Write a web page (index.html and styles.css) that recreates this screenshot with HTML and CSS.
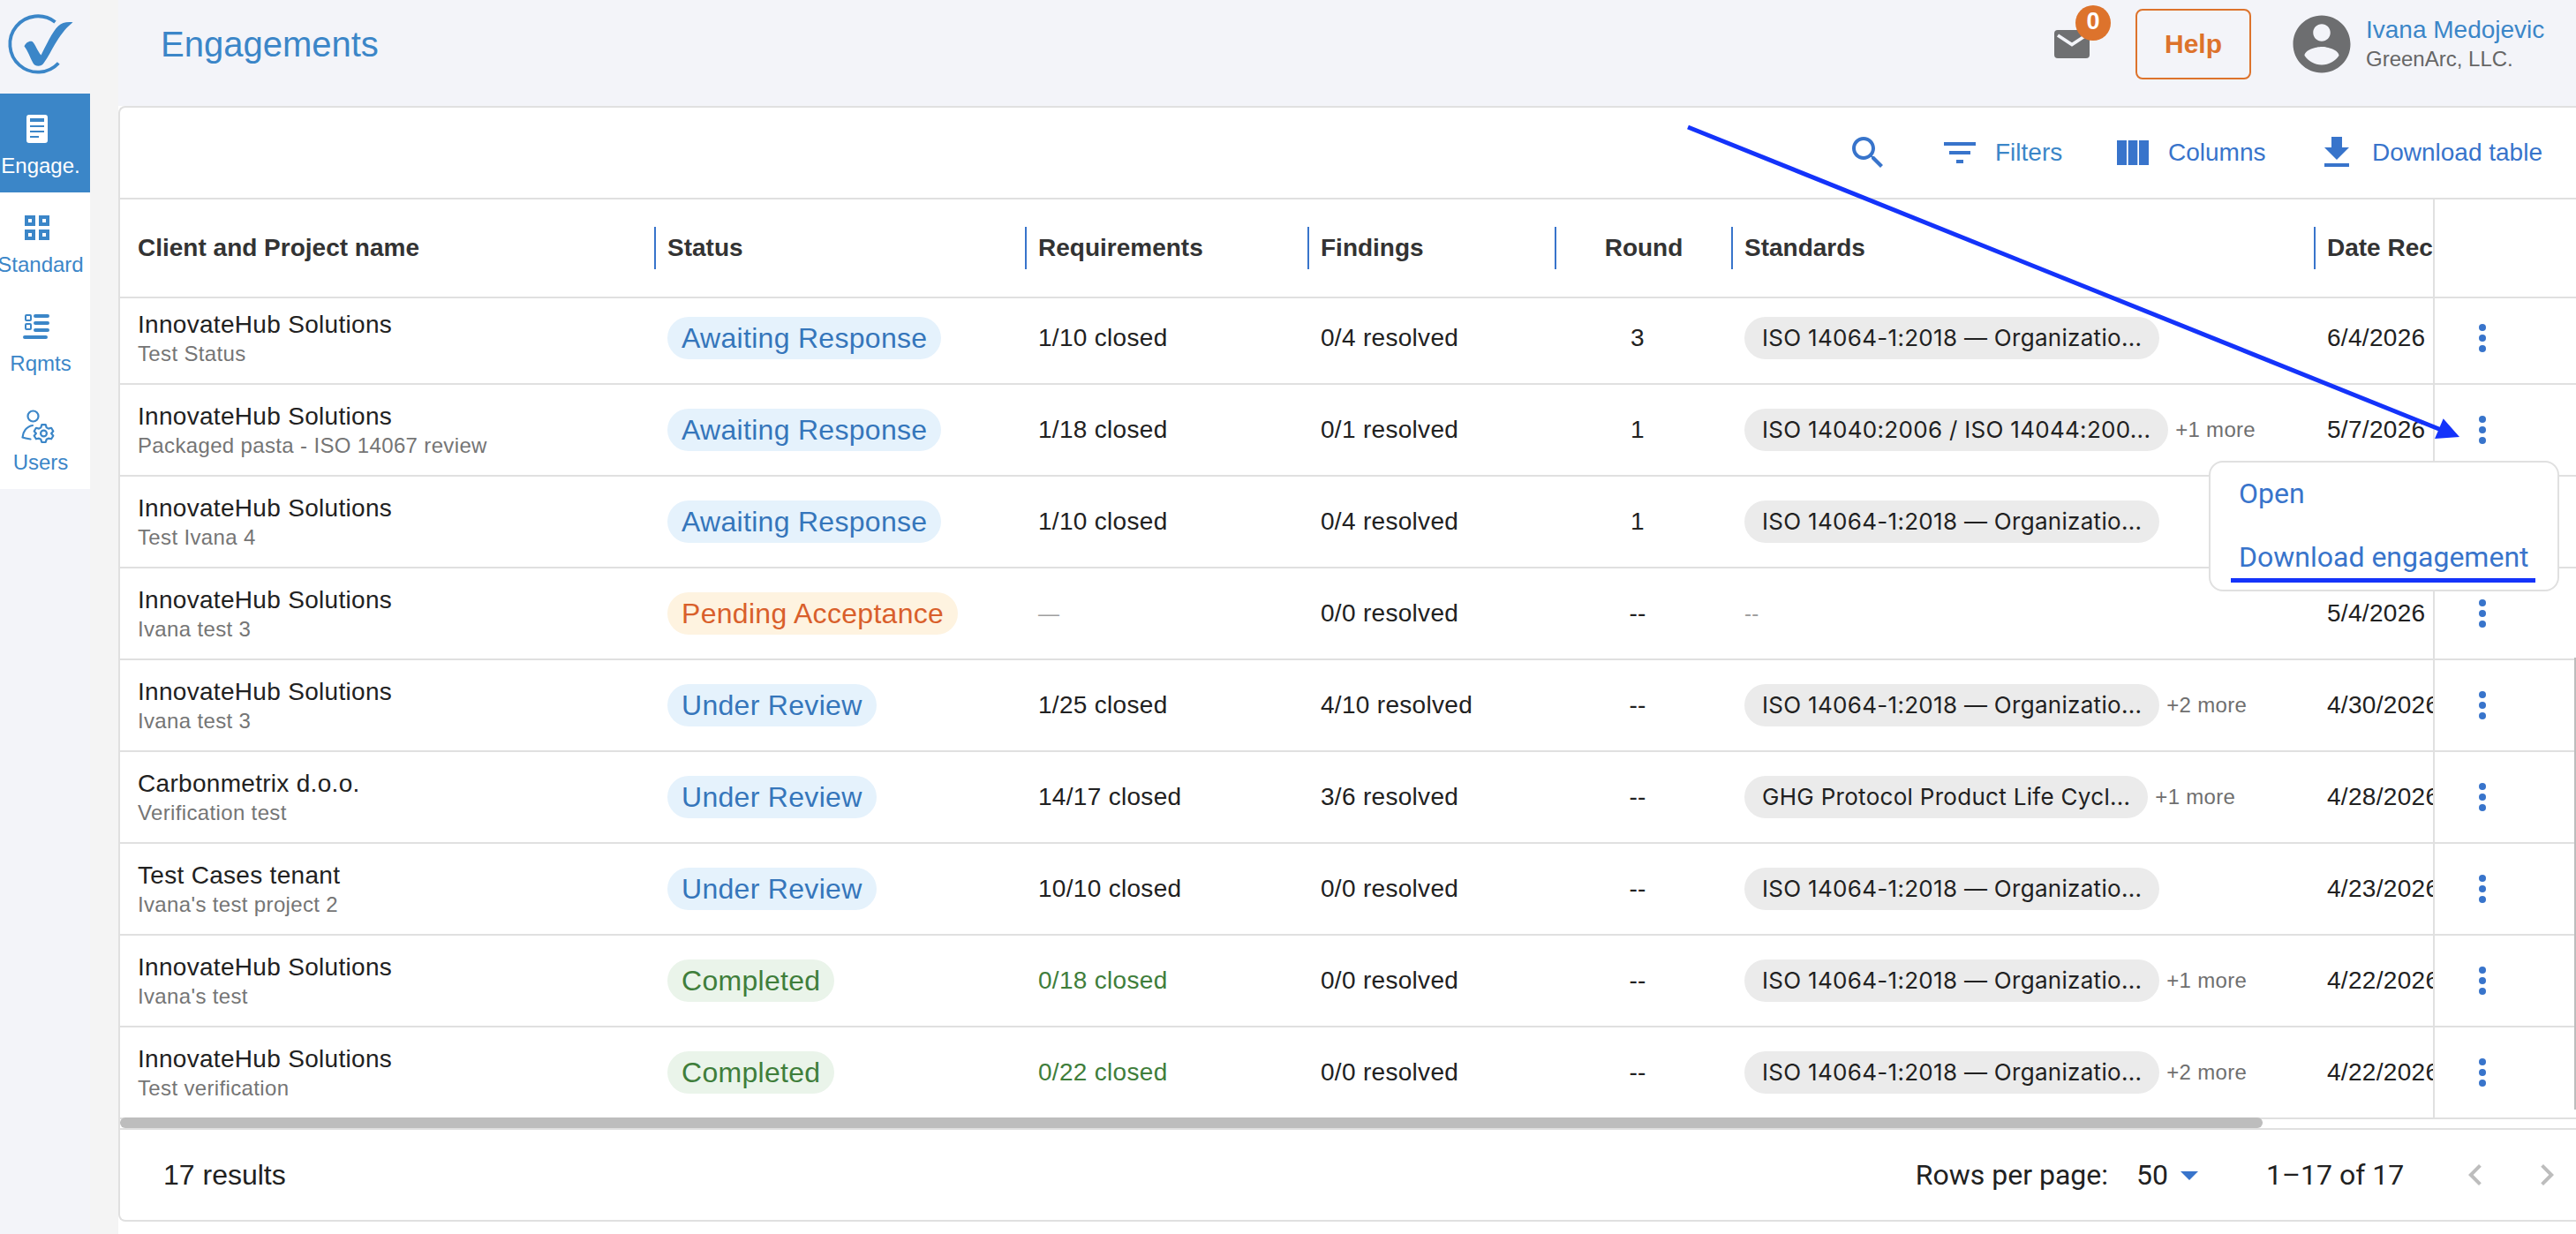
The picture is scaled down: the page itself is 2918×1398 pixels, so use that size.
FILE: index.html
```html
<!DOCTYPE html>
<html lang="en">
<head>
  <meta charset="UTF-8" />
  <meta name="viewport" content="width=device-width, initial-scale=1.0"/>
  <title>Engagements</title>
  <link rel="stylesheet" href="styles.css">
</head>
<body>
  <!-- Shared icons -->
  <svg class="defs" width="0" height="0">
    <symbol id="dots" viewBox="0 0 8 32">
      <circle cx="4" cy="4" r="4"/><circle cx="4" cy="16" r="4"/><circle cx="4" cy="28" r="4"/>
    </symbol>
  </svg>

  <div class="app">
    <nav class="sidebar">
      <div class="logo">
        <svg width="102" height="106" viewBox="0 0 102 106">
          <path d="M62.5 25 A31.7 31.7 0 1 0 66.3 71.5" fill="none" stroke="#3b86c8" stroke-width="3.8"/>
          <path d="M27.5 52.5 C29 48.5 33 46 36.5 47 C40 50 42.5 58 46.5 62.5 C52 52 59 36 66 29.500 C70 25.500 76 24.500 82.500 25.300 C73 33 68 41 62 50.500 C58 57 55 64 49.500 71.500 C46.500 76 40 75.800 37.500 71.500 C34.500 66 31.500 57.500 27.500 52.500 Z" fill="#3b86c8"/>
        </svg>
      </div>
      <a class="nav-item active">
        <svg width="40" height="40" viewBox="0 0 40 40">
          <path fill="#fff" fill-rule="evenodd" d="M11 4h18a3 3 0 0 1 3 3v26a3 3 0 0 1-3 3H11a3 3 0 0 1-3-3V7a3 3 0 0 1 3-3z M12 8v4h16V8z M12 16v2h16v-2z M12 22v2h16v-2z M12 28v2h10v-2z"/>
        </svg>
        <span>Engage.</span>
      </a>
      <a class="nav-item">
        <svg width="40" height="40" viewBox="0 0 40 40">
          <path fill="none" stroke="#3b86c8" stroke-width="4" d="M8 8h8v8H8z M24 8h8v8h-8z M8 24h8v8H8z M24 24h8v8h-8z"/>
        </svg>
        <span>Standard</span>
      </a>
      <a class="nav-item">
        <svg width="40" height="40" viewBox="0 0 40 40">
          <g fill="none" stroke="#3b86c8">
            <path stroke-width="2" d="M8 7h4a1 1 0 0 1 1 1v4a1 1 0 0 1-1 1H8a1 1 0 0 1-1-1V8a1 1 0 0 1 1-1z M8 17h4a1 1 0 0 1 1 1v4a1 1 0 0 1-1 1H8a1 1 0 0 1-1-1v-4a1 1 0 0 1 1-1z"/>
            <path stroke-width="4" stroke-linecap="round" d="M18 8h14 M18 16h14 M18 24h14 M6 32h24"/>
          </g>
        </svg>
        <span>Rqmts</span>
      </a>
      <a class="nav-item">
        <svg width="40" height="40" viewBox="0 0 40 40">
          <g fill="none" stroke="#3b86c8" stroke-width="2.200" stroke-linecap="round" stroke-linejoin="round">
            <circle cx="15.500" cy="9.500" r="6"/>
            <path d="M15 20C8 21 4 27 3.500 33.500C6 34.500 9 35 12.500 35.500"/>
            <circle cx="27.500" cy="29" r="3.400"/>
            <path d="M25.300 19.200h4.400l1 3.200 2.200 1.200 3.200-.8 2.200 3.700-2.200 2.500 2.200 2.700-2.200 3.600-3.200-.7-2.200 1.200-1 3.200h-4.400l-1-3.200-2.200-1.200-3.200.7-2.200-3.600 2.200-2.700-2.200-2.500 2.200-3.700 3.200.8 2.200-1.200z"/>
          </g>
        </svg>
        <span>Users</span>
      </a>
    </nav>

    <main class="main">
      <header class="topbar">
        <h1>Engagements</h1>
        <div class="mail">
          <svg width="40" height="32" viewBox="0 0 40 32">
            <rect width="40" height="32" rx="4" fill="#6f7072"/>
            <path d="M4 6l16 10.500L36 6" fill="none" stroke="#f3f4f9" stroke-width="3.800"/>
          </svg>
          <span class="badge">0</span>
        </div>
        <button class="help">Help</button>
        <svg class="avatar" width="78" height="78" viewBox="0 0 24 24">
          <path fill="#6d6e70" d="M12 2C6.480 2 2 6.480 2 12s4.480 10 10 10 10-4.480 10-10S17.520 2 12 2zm0 3c1.660 0 3 1.340 3 3s-1.340 3-3 3-3-1.340-3-3 1.340-3 3-3zm0 14.200c-2.500 0-4.710-1.280-6-3.220.030-1.990 4-3.080 6-3.080 1.990 0 5.970 1.090 6 3.080-1.290 1.940-3.500 3.220-6 3.220z"/>
        </svg>
        <div class="user">
          <div class="user-name">Ivana Medojevic</div>
          <div class="user-org">GreenArc, LLC.</div>
        </div>
      </header>

      <section class="card">
        <div class="toolbar">
          <svg class="search" width="48" height="48" viewBox="0 0 24 24">
            <path d="M15.500 14h-.790l-.280-.270C15.410 12.590 16 11.110 16 9.500 16 5.910 13.090 3 9.500 3S3 5.910 3 9.500 5.910 16 9.500 16c1.610 0 3.090-.590 4.230-1.570l.270.280v.790l5 4.990L20.490 19l-4.990-5zm-6 0C7.010 14 5 11.990 5 9.500S7.010 5 9.500 5 14 7.010 14 9.500 11.990 14 9.500 14z"/>
          </svg>
          <a class="tool tool-filters">
            <svg width="48" height="48" viewBox="0 0 24 24"><path d="M10 18h4v-2h-4v2zM3 6v2h18V6H3zm3 7h12v-2H6v2z"/></svg>
            Filters
          </a>
          <a class="tool tool-columns">
            <svg width="48" height="48" viewBox="0 0 48 48"><path d="M6 10h11v28H6z M18.700 10h10.600v28H18.700z M31 10h11v28H31z"/></svg>
            Columns
          </a>
          <a class="tool tool-download">
            <svg width="48" height="48" viewBox="0 0 24 24"><path d="M19 9h-4V3H9v6H5l7 7 7-7zM5 18v2h14v-2H5z"/></svg>
            Download table
          </a>
        </div>

        <div class="row head">
          <div class="cell">Client and Project name</div>
          <div class="cell"><span class="sep">Status</span></div>
          <div class="cell"><span class="sep">Requirements</span></div>
          <div class="cell"><span class="sep">Findings</span></div>
          <div class="cell"><span class="sep sep-center">Round</span></div>
          <div class="cell"><span class="sep">Standards</span></div>
          <div class="cell"><span class="sep">Date Rec</span></div>
          <div class="cell actions"></div>
        </div>

        <div class="rows">
          <div class="row">
            <div class="cell client"><div class="name">InnovateHub Solutions</div><div class="project">Test Status</div></div>
            <div class="cell"><span class="status blue">Awaiting Response</span></div>
            <div class="cell">1/10 closed</div>
            <div class="cell">0/4 resolved</div>
            <div class="cell round">3</div>
            <div class="cell"><span class="chip">ISO 14064-1:2018 — Organizatio...</span></div>
            <div class="cell">6/4/2026</div>
            <div class="cell actions"><svg class="dots"><use href="#dots"/></svg></div>
          </div>
          <div class="row">
            <div class="cell client"><div class="name">InnovateHub Solutions</div><div class="project">Packaged pasta - ISO 14067 review</div></div>
            <div class="cell"><span class="status blue">Awaiting Response</span></div>
            <div class="cell">1/18 closed</div>
            <div class="cell">0/1 resolved</div>
            <div class="cell round">1</div>
            <div class="cell"><span class="chip">ISO 14040:2006 / ISO 14044:200...</span><span class="more">+1 more</span></div>
            <div class="cell">5/7/2026</div>
            <div class="cell actions">
              <svg class="dots"><use href="#dots"/></svg>
              <div class="menu">
                <a>Open</a>
                <a class="marked">Download engagement</a>
              </div>
            </div>
          </div>
          <div class="row">
            <div class="cell client"><div class="name">InnovateHub Solutions</div><div class="project">Test Ivana 4</div></div>
            <div class="cell"><span class="status blue">Awaiting Response</span></div>
            <div class="cell">1/10 closed</div>
            <div class="cell">0/4 resolved</div>
            <div class="cell round">1</div>
            <div class="cell"><span class="chip">ISO 14064-1:2018 — Organizatio...</span></div>
            <div class="cell"></div>
            <div class="cell actions"></div>
          </div>
          <div class="row">
            <div class="cell client"><div class="name">InnovateHub Solutions</div><div class="project">Ivana test 3</div></div>
            <div class="cell"><span class="status orange">Pending Acceptance</span></div>
            <div class="cell"><span class="empty">—</span></div>
            <div class="cell">0/0 resolved</div>
            <div class="cell round">--</div>
            <div class="cell"><span class="empty">--</span></div>
            <div class="cell">5/4/2026</div>
            <div class="cell actions"><svg class="dots"><use href="#dots"/></svg></div>
          </div>
          <div class="row">
            <div class="cell client"><div class="name">InnovateHub Solutions</div><div class="project">Ivana test 3</div></div>
            <div class="cell"><span class="status blue">Under Review</span></div>
            <div class="cell">1/25 closed</div>
            <div class="cell">4/10 resolved</div>
            <div class="cell round">--</div>
            <div class="cell"><span class="chip">ISO 14064-1:2018 — Organizatio...</span><span class="more">+2 more</span></div>
            <div class="cell">4/30/2026</div>
            <div class="cell actions"><svg class="dots"><use href="#dots"/></svg></div>
          </div>
          <div class="row">
            <div class="cell client"><div class="name">Carbonmetrix d.o.o.</div><div class="project">Verification test</div></div>
            <div class="cell"><span class="status blue">Under Review</span></div>
            <div class="cell">14/17 closed</div>
            <div class="cell">3/6 resolved</div>
            <div class="cell round">--</div>
            <div class="cell"><span class="chip">GHG Protocol Product Life Cycl...</span><span class="more">+1 more</span></div>
            <div class="cell">4/28/2026</div>
            <div class="cell actions"><svg class="dots"><use href="#dots"/></svg></div>
          </div>
          <div class="row">
            <div class="cell client"><div class="name">Test Cases tenant</div><div class="project">Ivana's test project 2</div></div>
            <div class="cell"><span class="status blue">Under Review</span></div>
            <div class="cell">10/10 closed</div>
            <div class="cell">0/0 resolved</div>
            <div class="cell round">--</div>
            <div class="cell"><span class="chip">ISO 14064-1:2018 — Organizatio...</span></div>
            <div class="cell">4/23/2026</div>
            <div class="cell actions"><svg class="dots"><use href="#dots"/></svg></div>
          </div>
          <div class="row">
            <div class="cell client"><div class="name">InnovateHub Solutions</div><div class="project">Ivana's test</div></div>
            <div class="cell"><span class="status green">Completed</span></div>
            <div class="cell done">0/18 closed</div>
            <div class="cell">0/0 resolved</div>
            <div class="cell round">--</div>
            <div class="cell"><span class="chip">ISO 14064-1:2018 — Organizatio...</span><span class="more">+1 more</span></div>
            <div class="cell">4/22/2026</div>
            <div class="cell actions"><svg class="dots"><use href="#dots"/></svg></div>
          </div>
          <div class="row">
            <div class="cell client"><div class="name">InnovateHub Solutions</div><div class="project">Test verification</div></div>
            <div class="cell"><span class="status green">Completed</span></div>
            <div class="cell done">0/22 closed</div>
            <div class="cell">0/0 resolved</div>
            <div class="cell round">--</div>
            <div class="cell"><span class="chip">ISO 14064-1:2018 — Organizatio...</span><span class="more">+2 more</span></div>
            <div class="cell">4/22/2026</div>
            <div class="cell actions"><svg class="dots"><use href="#dots"/></svg></div>
          </div>
          <div class="vscroll"></div>
        </div>
        <div class="hscroll"><div class="thumb"></div></div>

        <footer class="footer">
          <div class="results">17 results</div>
          <div class="rpp">Rows per page:</div>
          <div class="rpp-value">50</div>
          <svg class="caret" width="20" height="10" viewBox="0 0 20 10"><path d="M0 0h20L10 10z"/></svg>
          <div class="range">1–17 of 17</div>
          <svg class="prev" width="48" height="48" viewBox="0 0 24 24"><path d="M15.410 16.590L10.830 12l4.580-4.590L14 6l-6 6 6 6 1.410-1.410z"/></svg>
          <svg class="next" width="48" height="48" viewBox="0 0 24 24"><path d="M8.590 16.590L13.170 12 8.590 7.410 10 6l6 6-6 6-1.410-1.410z"/></svg>
        </footer>
      </section>
    </main>

    <!-- Arrow pointing at the row menu -->
    <svg class="arrow" width="2918" height="1398" viewBox="0 0 2918 1398">
      <path d="M1912 144L2764 486.500" fill="none" stroke="#1433fa" stroke-width="5"/>
      <path d="M2786 495L2767.700 474.300L2758 497z" fill="#1433fa"/>
    </svg>
  </div>
</body>
</html>
```

FILE: styles.css
```css
* {
  box-sizing: border-box;
}
body {
  margin: 0;
  font-family: "Liberation Sans", Helvetica, Arial, sans-serif;
  font-size: 28px;
  color: #212121;
  background-color: #fff;
  overflow: hidden;
}
.defs {
  display: none;
}
.app {
  position: relative;
  display: flex;
  width: 2918px;
  height: 1398px;
  background-color: #f4f4f4;
}

/* Sidebar */
.sidebar {
  width: 102px;
  margin-right: 32px;
  flex-shrink: 0;
  background-color: #f3f4f9;
}
.logo {
  height: 106px;
}
.logo svg {
  display: block;
}
.nav-item {
  display: flex;
  flex-direction: column;
  align-items: center;
  height: 112px;
  padding: 20px 18px 0 0;
  font-size: 24px;
  color: #3b86c8;
  background-color: #fff;
}
.nav-item.active {
  color: #fff;
  background-color: #3b86c8;
}
.nav-item svg {
  display: block;
  overflow: visible;
}
.nav-item span {
  margin: 8px -20px 0 -12px;
  line-height: 28px;
}

/* Top bar */
.main {
  flex: 1;
  min-width: 0;
  background-color: #fff;
}
.topbar {
  display: flex;
  align-items: center;
  height: 120px;
  padding: 0 36px 20px 48px;
  background-color: #f3f4f9;
}
h1 {
  margin: 0 auto 0 0;
  font-size: 40px;
  font-weight: normal;
  color: #3b86c8;
}
.mail {
  position: relative;
  width: 40px;
  height: 32px;
  margin-right: 52px;
}
.mail svg {
  display: block;
}
.badge {
  position: absolute;
  left: 24px;
  top: -28px;
  width: 40px;
  height: 40px;
  border-radius: 50%;
  background-color: #dd732c;
  color: #fff;
  font-size: 27px;
  font-weight: bold;
  line-height: 37px;
  text-align: center;
}
.help {
  width: 131px;
  height: 80px;
  padding: 0;
  border: 2px solid #dd732c;
  border-radius: 8px;
  background: none;
  color: #dd732c;
  font-family: inherit;
  font-size: 30px;
  font-weight: bold;
}
.avatar {
  margin: 0 11px 0 41px;
}
.user {
  width: 202px;
  white-space: nowrap;
}
.user-name {
  color: #3b86c8;
  line-height: 34px;
}
.user-org {
  color: #666;
  font-size: 24px;
  line-height: 32px;
}

/* Table card */
.card {
  height: 1264px;
  border: 2px solid #e0e0e0;
  border-right: none;
  border-radius: 8px 0 0 8px;
  background-color: #fff;
}
.toolbar {
  display: flex;
  align-items: center;
  height: 104px;
  padding-right: 38px;
  border-bottom: 2px solid #e0e0e0;
  fill: #3874cb;
  color: #3874cb;
}
.search {
  margin: 0 56px 0 auto;
}
.tool {
  display: flex;
  align-items: center;
  gap: 16px;
}
.tool-filters {
  width: 196px;
  color: #3b86c8;
}
.tool-columns {
  width: 231px;
}
.tool-download {
  width: 257px;
  white-space: nowrap;
}
.row {
  display: grid;
  grid-template-columns: 605px 420px 320px 280px 200px 660px 135px 1fr;
  height: 104px;
  border-bottom: 2px solid #e0e0e0;
}
.cell {
  display: flex;
  align-items: center;
  min-width: 0;
  padding-left: 15px;
  overflow: hidden;
  white-space: nowrap;
  letter-spacing: 0.3px;
}
.cell:first-child {
  padding-left: 20px;
}
.head {
  height: 112px;
  font-weight: bold;
  color: #333;
}
.head .cell {
  letter-spacing: 0;
}
.head .cell:not(:first-child) {
  padding-left: 0;
}
.sep {
  flex: 1;
  padding-left: 13px;
  border-left: 2px solid #3874cb;
  line-height: 48px;
}
.sep-center {
  padding-left: 0;
  text-align: center;
}
.rows {
  position: relative;
  height: 930px;
  overflow: hidden;
}
.rows .row:first-child {
  margin-top: -6px;
}
.client {
  flex-direction: column;
  align-items: flex-start;
  justify-content: center;
}
.name {
  line-height: 35px;
}
.project {
  font-size: 24px;
  line-height: 31px;
  letter-spacing: 0.35px;
  color: #757575;
}
.status {
  height: 48px;
  padding: 0 16px;
  border-radius: 24px;
  font-size: 32px;
  line-height: 48px;
}
.blue {
  color: #3576bb;
  background-color: #e5f2fc;
}
.orange {
  color: #d95f2b;
  background-color: #fef3e0;
}
.green {
  color: #3f7e3b;
  background-color: #eaf4ea;
}
.done {
  color: #3f7e3b;
}
.round {
  justify-content: center;
  padding: 0 12px 0 0;
}
.chip {
  height: 48px;
  padding: 0 20px;
  border-radius: 24px;
  background-color: #ebebeb;
  font-family: Inter, sans-serif;
  font-size: 26px;
  line-height: 47px;
}
.more {
  margin-left: 8px;
  font-size: 24px;
  color: #6f6f6f;
}
.empty {
  font-size: 24px;
  color: #9e9e9e;
}
.cell.actions {
  position: relative;
  padding-left: 50px;
  border-left: 2px solid #e0e0e0;
  overflow: visible;
}
.dots {
  width: 8px;
  height: 32px;
  fill: #3874cb;
}
.menu {
  position: absolute;
  z-index: 2;
  top: 86px;
  right: 19px;
  width: 397px;
  height: 148px;
  padding: 0 0 0 32px;
  border: 2px solid #e0e0e0;
  border-radius: 16px;
  background-color: #fff;
  font-family: Roboto, sans-serif;
  font-size: 32px;
  letter-spacing: 0;
  color: #3874cb;
}
.menu a {
  display: block;
  height: 72px;
  line-height: 71px;
}
.marked::after {
  content: "";
  position: absolute;
  left: 23px;
  bottom: 8px;
  width: 345px;
  height: 5px;
  background-color: #1433fa;
}

/* Scrollbars */
.vscroll {
  position: absolute;
  right: 0;
  top: 407px;
  width: 2px;
  height: 512px;
  background-color: #bdbdbd;
}
.hscroll {
  height: 10px;
}
.thumb {
  position: relative;
  top: -2px;
  width: 2427px;
  height: 12px;
  border-radius: 6px;
  background-color: #bdbdbd;
}

.footer {
  display: flex;
  align-items: center;
  height: 104px;
  padding: 0 9px 0 49px;
  border-top: 2px solid #e0e0e0;
  font-family: Roboto, sans-serif;
  font-size: 32px;
  white-space: nowrap;
}
.results {
  margin-right: auto;
  font-family: "Liberation Sans", Helvetica, Arial, sans-serif;
}
.rpp-value {
  margin: 0 14px 0 32px;
}
.caret {
  margin-top: 2px;
  fill: #3874cb;
}
.range {
  width: 156px;
  margin: 0 57px 0 77px;
}
.prev, .next {
  fill: #bdbdbd;
}
.next {
  margin-left: 33px;
}

/* Annotation */
.arrow {
  position: absolute;
  left: 0;
  top: 0;
  z-index: 3;
}
```
